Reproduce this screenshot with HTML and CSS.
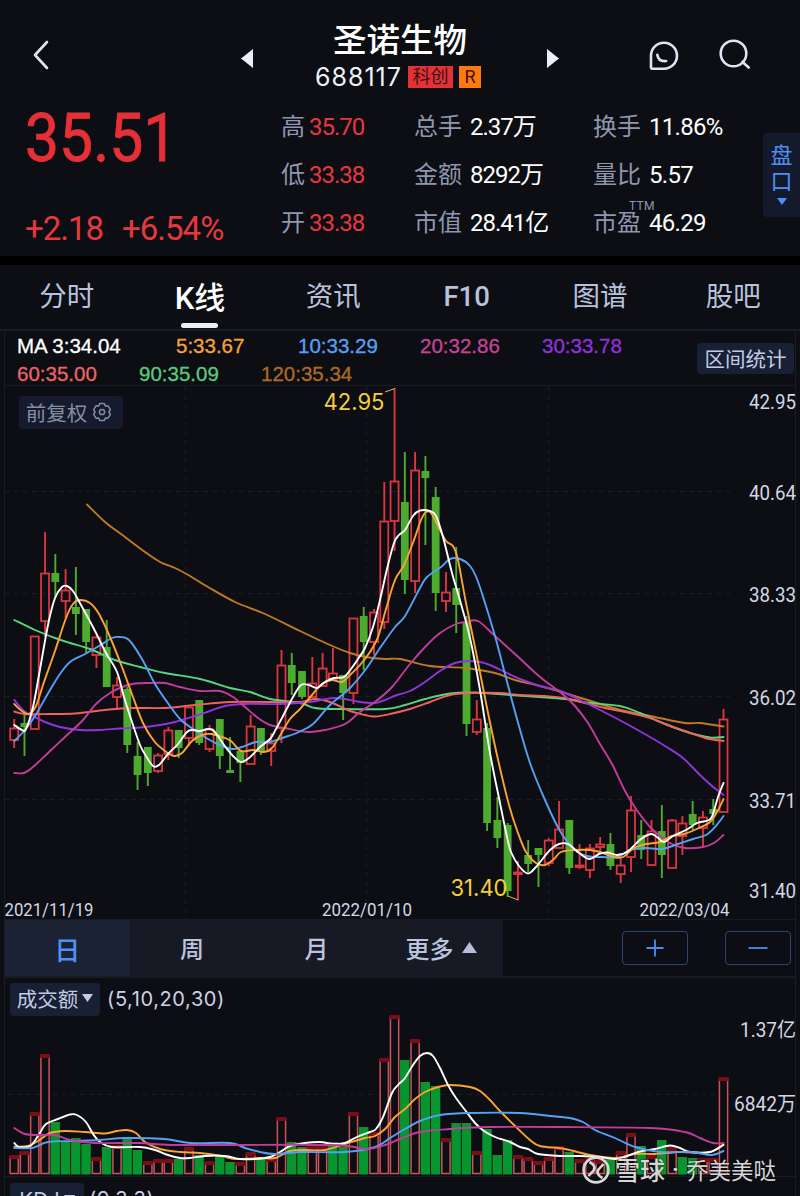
FILE: index.html
```html
<!DOCTYPE html>
<html lang="zh-CN">
<head>
  <meta charset="UTF-8" />
  <meta name="viewport" content="width=device-width, initial-scale=1.0"/>
  <title>圣诺生物 688117</title>
  <link rel="stylesheet" href="styles.css">
</head>
<body>

  <header class="top">
    <svg class="icon-back" width="18" height="32" viewBox="0 0 18 32"><path d="M15 3 L3 16 L15 29"/></svg>
    <svg class="icon-prev" width="12" height="19" viewBox="0 0 12 19"><path d="M12 0 V19 L0 9.5 Z"/></svg>
    <div class="stock">
      <h1>圣诺生物</h1>
      <div class="code-row">
        <span class="code">688117</span>
        <span class="tag tag-red">科创</span>
        <span class="tag tag-orange">R</span>
      </div>
    </div>
    <svg class="icon-next" width="12" height="19" viewBox="0 0 12 19"><path d="M0 0 V19 L12 9.5 Z"/></svg>
    <svg class="icon-chat" width="30" height="30" viewBox="0 0 30 30"><path d="M2 26.5 V14.5 A13 13 0 1 1 15 27.7 H3.2 Q2 27.7 2 26.5 M8.3 13.7 C9 18.3 12 20.6 17.2 20"/></svg>
    <svg class="icon-search" width="34" height="32" viewBox="0 0 34 32"><circle cx="15.5" cy="14.5" r="12.8"/><path d="M24.5 23 L30.7 28.5"/></svg>
  </header>

  <section class="quote">
    <div class="price-box">
      <div class="price">35.51</div>
      <div class="change"><span>+2.18</span><span>+6.54%</span></div>
    </div>
    <div class="stats">
      <div class="stat up"><label>高</label><b>35.70</b></div>
      <div class="stat"><label>总手</label><b>2.37万</b></div>
      <div class="stat"><label>换手</label><b>11.86%</b></div>
      <div class="stat up"><label>低</label><b>33.38</b></div>
      <div class="stat"><label>金额</label><b>8292万</b></div>
      <div class="stat"><label>量比</label><b>5.57</b></div>
      <div class="stat up"><label>开</label><b>33.38</b></div>
      <div class="stat"><label>市值</label><b>28.41亿</b></div>
      <div class="stat"><label>市盈<sup>TTM</sup></label><b>46.29</b></div>
    </div>
    <div class="side-tab">
      <span>盘</span><span>口</span>
      <svg width="10" height="7" viewBox="0 0 10 7"><path d="M0 0 H10 L5 7 Z"/></svg>
    </div>
  </section>

  <nav class="tabs">
    <a>分时</a>
    <a class="active">K线</a>
    <a>资讯</a>
    <a>F10</a>
    <a>图谱</a>
    <a>股吧</a>
  </nav>

  <main class="panel">
    <div class="legend">
      <div class="legend-list">
        <div class="legend-row">
          <span class="ma3">MA 3:34.04</span>
          <span class="ma5">5:33.67</span>
          <span class="ma10">10:33.29</span>
          <span class="ma20">20:32.86</span>
          <span class="ma30">30:33.78</span>
        </div>
        <div class="legend-row">
          <span class="ma60">60:35.00</span>
          <span class="ma90">90:35.09</span>
          <span class="ma120">120:35.34</span>
        </div>
      </div>
      <button class="range-btn">区间统计</button>
    </div>

    <div class="chart">
      <svg id="kline" width="790" height="533" viewBox="5 386 790 533"></svg>
      <button class="adjust-btn">前复权
        <svg width="20" height="20" viewBox="0 0 20 20"><path d="M7.7 1.5 H12.3 L13.3 4 L16 3.8 L18.4 7.6 L16.9 10 L18.4 12.4 L16 16.2 L13.3 16 L12.3 18.5 H7.7 L6.7 16 L4 16.2 L1.6 12.4 L3.1 10 L1.6 7.6 L4 3.8 L6.7 4 Z"/><circle cx="10" cy="10" r="2.6"/></svg>
      </button>
    </div>

    <div class="period">
      <a class="active">日</a>
      <a>周</a>
      <a>月</a>
      <a>更多 <svg width="15" height="11" viewBox="0 0 15 11"><path d="M7.5 0 L15 11 H0 Z"/></svg></a>
      <div class="zoom-btns">
        <button><svg width="18" height="18" viewBox="0 0 18 18"><path d="M0.5 9 H17.5 M9 0.5 V17.5"/></svg></button>
        <button><svg width="20" height="18" viewBox="0 0 20 18"><path d="M0.5 9 H19.5"/></svg></button>
      </div>
    </div>

    <div class="indicator">
      <button>成交额<svg width="11" height="8" viewBox="0 0 11 8"><path d="M0 0 H11 L5.5 8 Z"/></svg></button>
      <span>(5,10,20,30)</span>
    </div>
    <svg id="volume" width="790" height="160" viewBox="5 1016 790 160"></svg>

    <div class="indicator kdj">
      <button>KDJ<svg width="11" height="8" viewBox="0 0 11 8"><path d="M0 0 H11 L5.5 8 Z"/></svg></button>
      <span>(9,3,3)</span>
    </div>
  </main>

  <div class="watermark">
    <svg width="28" height="28" viewBox="0 0 28 28"><circle cx="14" cy="14" r="12.4"/><path d="M7.5 6 C11 8 14 11 11.5 14.5 L6.5 20 M20.5 22 C17 20 14 17 16.5 13.5 L21.5 8"/></svg>
    <span class="brand">雪球</span><span class="dot">·</span><span>乔美美哒</span>
  </div>

  <script src="chart.js"></script>
</body>
</html>
```
FILE: styles.css
```css
* {
  box-sizing: border-box;
}

body {
  margin: 0;
  width: 800px;
  height: 1196px;
  overflow: hidden;
  position: relative;
  background: #0c0e13;
  color: #fff;
  font-family: Roboto, 'Noto Sans CJK SC', sans-serif;
}

svg {
  display: block;
  flex: none;
}

button {
  border: none;
  padding: 0;
  font-family: inherit;
  color: #c3cbe4;
  background: #182033;
  border-radius: 4px;
  display: flex;
  align-items: center;
  justify-content: center;
}

/* title bar */
.top {
  height: 102px;
  display: flex;
  align-items: flex-start;
  padding-left: 32px;
}

.top svg {
  fill: none;
  stroke: #dfe3f3;
  stroke-width: 2.6;
  stroke-linecap: round;
  stroke-linejoin: round;
}

.top .icon-back {
  margin-top: 39px;
}

.top .icon-prev,
.top .icon-next {
  fill: #eceefb;
  stroke: none;
  margin-top: 49px;
}

.top .icon-prev {
  margin-left: 191px;
}

.top .icon-chat {
  margin: 41px 0 0 90px;
}

.top .icon-search {
  margin: 39px 0 0 39px;
}

.stock {
  width: 294px;
  padding-top: 19px;
  display: flex;
  flex-direction: column;
  align-items: center;
}

.stock h1 {
  margin: 0;
  font-size: 33.5px;
  line-height: 44px;
  font-weight: 500;
}

.code-row {
  display: flex;
  align-items: center;
  height: 28px;
  margin-left: -4px;
}

.code {
  font-family: Inter, sans-serif;
  font-size: 25px;
  line-height: 28px;
  letter-spacing: 1px;
  margin-right: 6px;
  color: #eef0fa;
}

.tag {
  height: 22px;
  line-height: 22px;
  font-size: 18px;
  padding: 0 4.5px;
  color: #43100f;
}

.tag-red {
  background: #e23238;
  margin-right: 6px;
}

.tag-orange {
  background: #ff7a0d;
  padding: 0 5.5px;
}

/* price and figures */
.quote {
  display: flex;
  height: 154px;
}

.price-box {
  width: 281px;
  padding-left: 25px;
  color: #e62f37;
}

.price {
  font-size: 67px;
  line-height: 73px;
  font-weight: 400;
  -webkit-text-stroke: 0.9px;
  transform: scaleX(0.905);
  transform-origin: left;
}

.change {
  font-size: 33px;
  line-height: 40px;
  margin-top: 34px;
  display: flex;
  gap: 19px;
  letter-spacing: -1px;
  color: #e5393f;
}

.stats {
  display: grid;
  grid-template-columns: 133px 179px 170px;
  grid-template-rows: repeat(3, 48px);
}

.stat {
  display: flex;
  align-items: center;
  font-size: 24px;
  line-height: 30px;
  white-space: nowrap;
}

.stat label {
  color: #8f97b0;
  margin-right: 8px;
  position: relative;
  top: 1px;
}

.stat.up label {
  margin-right: 4px;
}

.stat b {
  font-weight: 400;
  letter-spacing: -1px;
  margin-top: 1px;
}

.stat:nth-child(3n) b {
  letter-spacing: -0.7px;
}

.stat.up b {
  color: #e8383e;
}

.stat sup {
  position: absolute;
  right: -14px;
  top: -8px;
  font-size: 12px;
  line-height: 12px;
  letter-spacing: 0.4px;
}

.side-tab {
  width: 37px;
  height: 84px;
  margin-top: 31px;
  border-radius: 4px 0 0 4px;
  background: #141a2b;
  color: #4e8ff5;
  font-size: 22px;
  line-height: 26px;
  display: flex;
  flex-direction: column;
  align-items: center;
  padding-top: 10px;
}

.side-tab svg {
  fill: #4e8ff5;
  margin-top: 3px;
}

/* tabs */
.tabs {
  height: 75px;
  border-top: 9px solid #000;
  border-bottom: 2px solid #181c23;
  display: flex;
}

.tabs a {
  flex: 1;
  text-align: center;
  font-size: 27.5px;
  line-height: 63px;
  color: #b9c2dd;
  position: relative;
}

.tabs a:nth-child(4) {
  font-weight: 500;
}

.tabs .active {
  color: #fff;
  font-size: 31px;
  font-weight: 500;
  line-height: 67px;
}

.tabs .active::after {
  content: '';
  position: absolute;
  left: 48px;
  bottom: 1px;
  width: 37px;
  height: 5px;
  border-radius: 3px;
  background: #eceefa;
}

/* chart panel */
.panel {
  width: 792px;
  margin-left: 4px;
  border: 1px solid #181c23;
  border-width: 0 1px;
}

.legend {
  height: 55px;
  border-bottom: 1px solid #181c23;
  display: flex;
  justify-content: space-between;
}

.legend-list {
  padding: 1px 0 0 12px;
}

.legend-row {
  display: flex;
  height: 28px;
  font-family: 'Liberation Sans', sans-serif;
  font-size: 20.5px;
  line-height: 28px;
  -webkit-text-stroke: 0.3px;
}

.legend-row span {
  width: 122px;
}

.legend-row .ma3 {
  width: 159px;
}

.ma3 { color: #fff; }
.ma5 { color: #f7a13b; }
.ma10 { color: #58a0f5; }
.ma20 { color: #c64496; }
.ma30 { color: #9032dc; }
.ma60 { color: #f06269; }
.ma90 { color: #58cb7d; }
.ma120 { color: #ad6a23; }

.range-btn {
  width: 97px;
  height: 31px;
  margin: 12px 1px 0 0;
  padding-bottom: 2px;
  font-size: 20.5px;
}

.chart {
  position: relative;
  height: 533px;
}

.adjust-btn {
  position: absolute;
  left: 14px;
  top: 10px;
  width: 104px;
  height: 33px;
  padding: 0 4px 2px 0;
  gap: 5px;
  font-size: 20.5px;
  color: #858da5;
  background: #151b2c;
}

.adjust-btn svg {
  fill: none;
  stroke: #858da5;
  stroke-width: 1.5;
  stroke-linejoin: round;
  margin-top: 1px;
}

/* period switch */
.period {
  height: 59px;
  border: 1px solid #171b22;
  border-width: 1px 0 2px;
  display: flex;
}

.period a {
  width: 124.6px;
  background: #171a25;
  color: #bcc4de;
  font-size: 24px;
  font-weight: 500;
  padding-bottom: 2px;
  display: flex;
  align-items: center;
  justify-content: center;
  gap: 8px;
}

.period a svg {
  fill: #b5bedb;
}

.period .active {
  background: #1b2233;
  color: #5290f4;
  font-size: 26px;
  padding-bottom: 0;
}

.zoom-btns {
  flex: 1;
  display: flex;
  justify-content: flex-end;
  gap: 37px;
  padding: 11px 4px 0 0;
}

.zoom-btns button {
  width: 66px;
  height: 34px;
  background: none;
  border: 1px solid #2b446f;
}

.zoom-btns svg {
  stroke: #4e8df0;
  stroke-width: 1.8;
}

.indicator {
  height: 38px;
  padding: 4px 0 0 5px;
  display: flex;
  align-items: center;
  font-size: 20.5px;
  color: #cdd2e6;
}

.indicator button {
  width: 90px;
  height: 33px;
  gap: 4px;
  padding-bottom: 2px;
  font-size: 20.5px;
  margin-right: 7px;
}

.indicator button svg {
  fill: #c3cbe4;
}

.indicator span {
  font-family: Inter, sans-serif;
  font-size: 20px;
  letter-spacing: 0.6px;
}

.kdj {
  border-top: 1px solid #171b22;
  height: 41px;
}

.kdj button {
  width: 74px;
  padding-bottom: 0;
  font-family: Inter, sans-serif;
  margin-right: 5px;
}

/* svg charts */
#kline, #volume {
  overflow: visible;
}

.grid {
  stroke: #191d23;
  stroke-width: 1;
  stroke-dasharray: 5 4;
  fill: none;
}

.axis {
  fill: #d3d7e6;
  font-size: 20px;
}

.date {
  fill: #d3d7e6;
  font-size: 17.5px;
}

.peak {
  fill: #f5cf3b;
  font-family: Inter, sans-serif;
  font-size: 22.5px;
}

.tick {
  stroke: #d9b85a;
  fill: none;
}

.line {
  fill: none;
  stroke-width: 1.9;
  stroke-linecap: round;
  stroke-linejoin: round;
}

.watermark {
  position: absolute;
  left: 582px;
  top: 1154px;
  height: 32px;
  display: flex;
  align-items: center;
  font-size: 22.5px;
  color: #d6d6d8;
  text-shadow: 0 0 2px #000;
}

.watermark svg {
  fill: none;
  stroke: #d9d9db;
  stroke-width: 2.6;
}

.watermark span {
  margin-top: -3px;
}

.watermark .brand {
  margin-left: 5px;
  font-size: 25px;
  font-weight: 500;
}

.watermark .dot {
  width: 21px;
  text-align: center;
  font-weight: 700;
}
```
FILE: chart.js
```js
const START = 14.2;
const STEP = 10.28;
const RED = '#dc3640';
const GREEN = '#4dab2e';

// [type, high, body top, body bottom, low]
const candles = [
  ['r',719,728,740,748],['g',715,723,727,756],['r',636,636,729,729],['r',532,573,621,637],['g',554,573,582,597],
  ['r',569,590,601,618],['g',567,607,614,635],['g',609,609,642,653],['r',636,637,655,668],['g',620,647,687,687],
  ['r',677,685,697,708],['g',687,689,745,753],['g',742,756,775,790],['g',747,747,773,786],['r',753,755,771,773],
  ['r',727,730,754,760],['g',730,730,748,758],['r',707,707,738,746],['g',700,700,743,745],['r',725,729,749,752],
  ['g',719,719,756,769],['g',737,770,773,773],['g',751,751,763,782],['r',715,726,764,764],['g',728,728,751,755],
  ['r',733,743,751,766],['r',650,665,728,743],['g',653,665,683,695],['g',671,671,697,699],['r',657,683,697,697],
  ['r',653,668,686,686],['r',648,673,679,679],['g',675,675,693,720],['r',618,618,693,704],['g',607,616,642,670],
  ['r',609,612,642,655],['r',482,521,622,629],['r',388,481,521,551],['g',452,502,580,594],['r',452,470,581,593],
  ['g',456,471,478,545],['g',487,497,593,611],['r',572,592,601,612],['g',547,588,605,633],['g',616,622,724,736],
  ['r',700,719,732,735],['g',723,728,823,831],['g',797,820,838,848],['g',823,825,891,897],['r',861,872,874,900],
  ['g',840,855,864,872],['g',848,848,855,887],['r',838,840,863,866],['r',801,829,848,848],['g',820,820,868,874],
  ['r',844,865,867,869],['r',844,848,870,878],['r',837,844,847,854],['g',833,844,866,870],['r',853,865,874,883],
  ['r',796,810,857,872],['g',820,835,850,859],['r',820,831,865,865],['g',805,831,855,878],['r',819,820,868,868],
  ['r',816,823,836,855],['g',801,814,825,830],['r',811,817,828,847],['g',799,809,814,825],['r',709,719,812,812]
];

const averages = [
  ['#c07a24', [87,504.5,105,522,125,537,145,552,160,562,175,568,190,576,208,587,235,602,265,614,300,631,330,645,350,653,366,657,385,659,400,659,430,666,465,668,495,673,515,680,540,686,565,693,600,704,625,711,655,717,685,723,700,723,723.5,726.5]],
  ['#58d67f', [14.3,620,35,630,55,638,70,643,90,649,115,660,140,667,165,673,200,679,230,688,250,692,270,699,300,703,315,708,335,709,385,709,405,705,425,699,450,693.5,475,692.5,510,695,540,697,565,699,590,703,620,706,640,713,665,724,690,733,710,737.5,723.5,737]],
  ['#f0625f', [14.3,711.5,25,714,50,714,75,713.5,105,710,130,708,165,708,195,705,230,702,270,702,300,702,315,699,330,702,350,711,365,715,375,716.5,390,714,410,709,430,702,450,695,470,693,500,693,520,695,545,696,565,698,585,703,605,708,630,713,650,718,665,724,685,731,705,738,723.5,741]],
  ['#8f35dc', [14.3,700,24,711,33,716,45,722,60,727,80,730,100,730,120,728.5,140,727.5,160,725,175,722,195,716,210,711,225,706,245,704,280,704,310,702,335,698,360,702,375,703,385,700,397,695,410,691,425,682,440,671,455,663,467,661,480,662,490,665,505,672,520,679,540,686,560,691,580,700,600,710,625,723,650,737,665,746,683,758,700,775,712,786,723.5,795]],
  ['#c23d9b', [14.3,773,24,773,33,767,48,753,66,736,83,720,96,704,110,693,125,686,135,683.5,150,683,165,683,180,687,200,691,220,691,233,697,245,707,258,718,270,725,285,728,300,731,310,732,325,730,345,724,360,712,375,702,392,687,410,664,427,645,440,633,456,624,466,622,478,621,495,636,515,654,540,677,560,692,575,706,588,723,600,744,612,764,625,791,636,809,650,827,660,836,672,844,685,848,703,847,714,843,723.5,835]],
  ['#56a0f6', [14.3,741,25,730,35,716,50,690,60,674,70,662,85,654,99,646,112,638,120,637,129,640,142,659,155,684,170,706,181,720,196,731,208,739,222,746,233,749,242,747,256,742,270,742,282,738,299,732,313,724,330,705,350,688,366,669,380,648,395,627,405,616,420,588,427,577,441,567,450,559,460,559,470,566,477,579,485,603,495,636,505,674,517,719,530,763,545,800,560,831,575,850,587,856,602,857,617,857,630,850,645,848,662,849,678,844,693,839,706,835,715,827,723.5,816]],
  ['#fda333', [14.3,704,22,711,29,714,36,706,44,682,55,651,66,618,73,604,80,600,90,603,99,614,110,637,122,667,133,697,143,723,154,741,165,751,174,756,182,753,192,741,202,735,211,734,222,737,231,741,241,751,253,750,264,752,272,748,281,734,290,719,300,709,312,695,322,684,332,680,342,682,350,675,360,665,370,652,378,637,386,609,395,580,404,565,414,540,421,520,426,512,431,513,438,526,446,541,453,546,458,560,466,603,476,652,486,703,497,755,509,805,518,833,526,852,536,863,545,865,554,859,561,852,575,850,590,850,600,852,614,857,623,857,634,848,646,844,660,842,672,836,684,834,699,828,710,822,717,812,723.5,799]],
  ['#ffffff', [14.3,725,22,730,26,729,33,707,39,675,48,625,55,598,62,587,67,586,73,591,81,605,94,629,106,653,117,672,124,697,132,722,140,745,146,756,153,766,159,765,168,754,178,744,187,732,193,730,200,731,208,729,214,731,224,745,233,756,241,762,249,758,260,747,270,739,276,729,283,716,293,697,301,685,309,685,317,688,325,682,334,678,344,677,351,669,358,659,365,648,373,627,380,600,387,569,394,543,399,535,405,530,413,516,420,510.5,430,511,436,516,443,537,452,573,461,604,470,638,480,690,490,753,500,803,507,837,511,852,519,866,528,873.5,536,867,550,850,559,844,568,844,578,852,589,859,599,854,607,852.5,617,855,627,852,641,839,651,834,657,837,664,842,673,836,686,830,697,823,709,820,713,814,718,797,723.5,783]]
];

// bar tops and their colours, same order as the candles
const volumeColors = 'rrrrggggrgrggrrrgrgrggrrgrrggrrggrgrrrgrggrggrgggrrrrrgrrrgrrgrgrggrrr';
const volumeTops = [
  1155,1151,1112,1054,1122,1141,1138,1144,1157,1147,1145,1137,1150,1161,1159,1159,1159,1147,1155,1161,
  1156,1162,1162,1152,1159,1158,1117,1142,1147,1145,1145,1142,1147,1112,1127,1132,1058,1015,1060,1039,
  1082,1086,1138,1123,1123,1151,1129,1155,1140,1155,1157,1161,1157,1146,1152,1159,1158,1160,1158,1151,
  1133,1146,1155,1140,1147,1157,1158,1158,1158,1077
];

const volumeAverages = [
  ['#fda333', [14.3,1147,28,1146,38,1141,50,1133,65,1131,85,1132,105,1133.5,117,1131,127,1130,136,1133,145,1142,160,1149,180,1152,200,1153,222,1156,235,1159,260,1158,275,1158,290,1151,305,1150,325,1150,345,1144,365,1138,375,1136,385,1129,395,1117,405,1109,415,1099,425,1092,438,1087,450,1085,470,1087,480,1091,490,1100,500,1111,515,1126,530,1140,540,1146,565,1149,590,1155,615,1158,635,1154,655,1154,680,1152,705,1153,715,1150,723.5,1144]],
  ['#ffffff', [14.3,1143,19,1147,30,1146,38,1136,46,1124,58,1119,70,1114.5,77,1115,86,1122,93,1134,100,1142,112,1147,140,1147,155,1150,168,1155,180,1158,190,1158,205,1156,225,1156,240,1159,255,1159,270,1157,280,1152,290,1146,305,1143,320,1142,333,1144,345,1143,357,1137,370,1132,376,1129,383,1117,392,1093,398,1085,405,1078,413,1065,420,1056,427,1053,433,1056,440,1068,448,1085,456,1098,465,1110,475,1123,484,1131,495,1137,510,1142,520,1147,528,1149,538,1154,560,1156,580,1156,600,1157,615,1159,625,1157,638,1152,655,1149,670,1145.5,680,1148,690,1152,710,1152,723.5,1145]],
  ['#56a0f6', [14.3,1148,32,1148,48,1142,75,1141,100,1140,125,1138,165,1139,190,1143,230,1143,245,1148,260,1152,275,1154,300,1152,345,1152,375,1147,390,1138,405,1129,420,1121,440,1115,470,1113,520,1113,550,1116,570,1118,583,1122,595,1130,615,1138,635,1147,660,1152,690,1152,712,1155,723.5,1151]],
  ['#c23d9b', [14.3,1128,25,1134,40,1135,55,1135,70,1140,95,1143,140,1143,180,1145,330,1145,365,1149,385,1145,400,1139,420,1132,450,1129,490,1127,560,1127,650,1128,685,1132,700,1138,713,1143,723.5,1143]]
];

function rect(x, y, w, h, attrs) {
  return `<rect x="${x}" y="${y}" width="${w}" height="${h}" ${attrs}/>`;
}

function text(cls, x, y, width, str) {
  return `<text class="${cls}" x="${x}" y="${y}" textLength="${width}" lengthAdjust="spacingAndGlyphs">${str}</text>`;
}

// smooth curve through a flat list of x, y pairs
function curve(color, list) {
  const p = [];
  for (let i = 0; i < list.length; i += 2) p.push([list[i], list[i + 1]]);
  let d = `M${p[0]}`;
  for (let i = 0; i < p.length - 1; i++) {
    const a = p[i - 1] || p[i];
    const b = p[i];
    const c = p[i + 1];
    const e = p[i + 2] || c;
    d += ` C${b[0] + (c[0] - a[0]) / 6},${b[1] + (c[1] - a[1]) / 6} ${c[0] - (e[0] - b[0]) / 6},${c[1] - (e[1] - b[1]) / 6} ${c}`;
  }
  return `<path class="line" stroke="${color}" d="${d}"/>`;
}

function drawKline() {
  let out = '<path class="grid" d="M5 491.5 H730 M5 593.5 H730 M5 696.5 H730 M5 799.5 H730 M185.5 386 V919 M366.5 386 V919 M548.5 386 V919"/>';
  candles.forEach(([type, high, top, bottom, low], i) => {
    const x = START + STEP * i;
    const color = type === 'r' ? RED : GREEN;
    out += `<path stroke="${color}" stroke-width="1.9" d="M${x} ${high} V${top} M${x} ${bottom} V${low}"/>`;
    if (type === 'r') {
      out += rect(x - 4, top + 0.5, 8, Math.max(bottom - top - 0.5, 1), `fill="none" stroke="${color}" stroke-width="1.8"`);
    } else {
      out += rect(x - 3.9, top, 7.8, bottom - top, `fill="${color}"`);
    }
  });
  averages.forEach(([color, list]) => out += curve(color, list));
  out += '<path class="tick" d="M385 392 L395 388.5 M508 896 L518 900"/>';
  out += text('peak', 323.5, 410, 61, '42.95') + text('peak', 450.5, 895.5, 57, '31.40');
  [['42.95', 409], ['40.64', 500], ['38.33', 602], ['36.02', 705], ['33.71', 808], ['31.40', 898]].forEach(([s, y]) => {
    out += text('axis', 749, y, 47, s);
  });
  out += text('date', 4.5, 916, 89, '2021/11/19') + text('date', 322, 916, 90, '2022/01/10') + text('date', 639.5, 916, 90, '2022/03/04');
  document.getElementById('kline').innerHTML = out;
}

function drawVolume() {
  let out = '<path class="grid" d="M8 1094.5 H734"/>';
  volumeTops.forEach((top, i) => {
    const x = START + STEP * i;
    if (volumeColors[i] === 'r') {
      out += rect(x - 4.1, top + 2, 8.2, 1173.5 - top - 2, 'fill="#0c0e13" stroke="#c9555b" stroke-width="1.5"');
      out += rect(x - 4.9, top, 9.8, 4, 'fill="#7d0c16"');
    } else {
      out += rect(x - 4.8, top, 9.4, 1174.5 - top, 'fill="#06952f"');
      out += rect(x - 4.8, top, 9.4, 1, 'fill="#347b2a"');
    }
  });
  volumeAverages.forEach(([color, list]) => out += curve(color, list));
  out += text('axis', 740, 1037, 56, '1.37亿') + text('axis', 734, 1111, 62, '6842万');
  document.getElementById('volume').innerHTML = out;
}

drawKline();
drawVolume();
```
